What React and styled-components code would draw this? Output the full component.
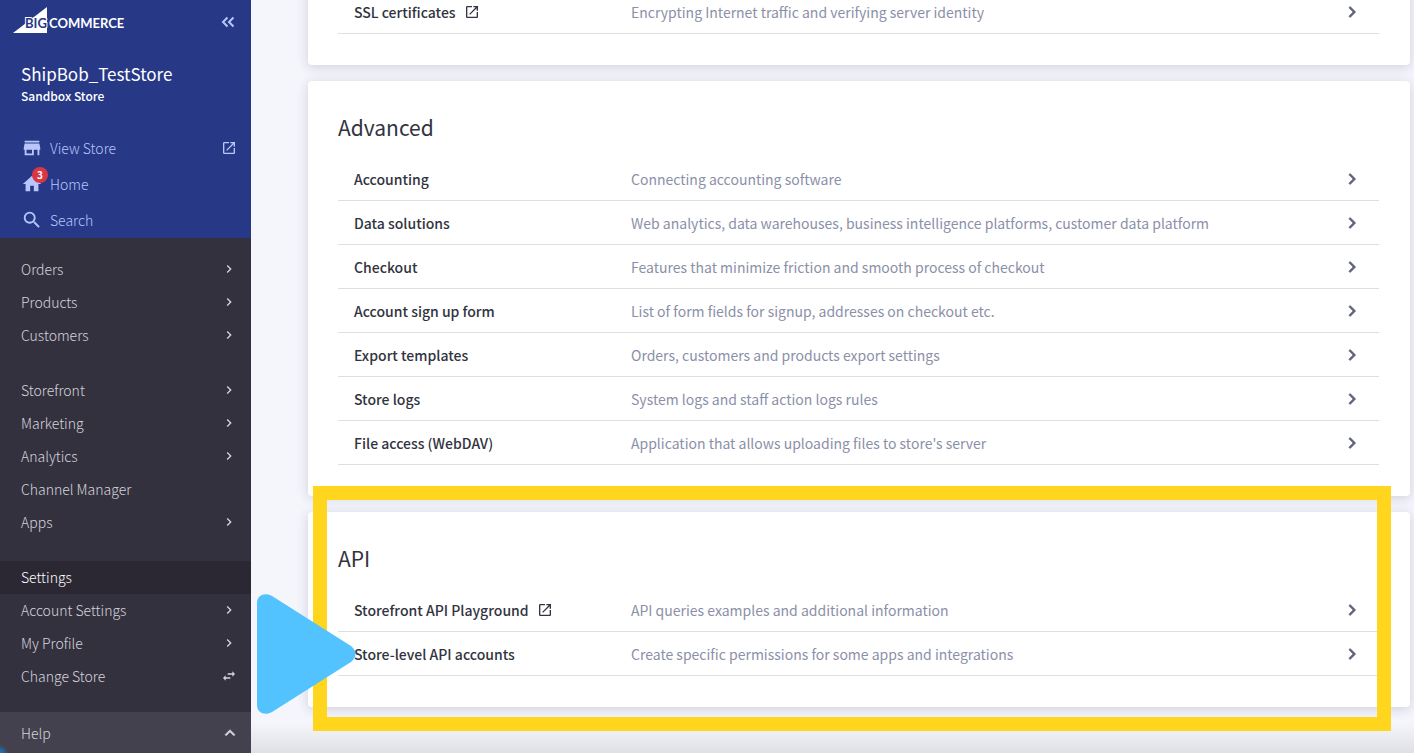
import React from "react";
import styled, { createGlobalStyle } from "styled-components";

const GlobalStyle = createGlobalStyle`
  * { box-sizing: border-box; }
  body {
    margin: 0;
    background: #f5f6fc;
    font-family: "Noto Sans CJK SC", "Noto Sans", sans-serif;
  }
  a { color: inherit; text-decoration: none; }
  ul { list-style: none; margin: 0; padding: 0; }
  button { border: 0; padding: 0; background: none; color: inherit; font: inherit; cursor: pointer; }
`;

const Shell = styled.div`
  display: flex;
  height: 100vh;
  overflow: hidden;
`;

const Sidebar = styled.aside`
  display: flex;
  flex-direction: column;
  flex: 0 0 251px;
  background: #34313f;
  color: #d5d4dc;
`;

const StorePanel = styled.div`
  background: #273887;
  color: #b9c6fb;
`;

const BrandBar = styled.div`
  display: flex;
  align-items: center;
  justify-content: space-between;
  height: 44px;
  padding: 0 15px 0 12px;
`;

const StoreName = styled.h1`
  margin: 18px 21px 0;
  color: #fff;
  font-size: 17px;
  font-weight: 400;
  line-height: 24px;
`;

const StoreKind = styled.p`
  margin: 0 21px 24px;
  color: #fff;
  font-size: 12px;
  font-weight: 500;
  line-height: 20px;
`;

const QuickLink = styled.a`
  display: flex;
  align-items: center;
  gap: 7px;
  height: 36px;
  padding: 0 14px 0 21px;
  font-size: 14px;
  font-weight: 300;
  line-height: 20px;
  > span:nth-child(2) { flex: 1; }
`;

const IconSlot = styled.span`
  position: relative;
  display: flex;
`;

const Badge = styled.span`
  position: absolute;
  top: -6px;
  right: -5px;
  width: 16px;
  height: 16px;
  border-radius: 50%;
  background: #db3643;
  color: #fff;
  font-size: 10px;
  font-weight: 700;
  line-height: 16px;
  text-align: center;
`;

const Nav = styled.nav`
  display: flex;
  flex-direction: column;
  gap: 22px;
  padding-top: 15px;
`;

const NavItem = styled.a`
  display: flex;
  align-items: center;
  justify-content: space-between;
  height: 33px;
  padding: 0 14px 1px 21px;
  background: ${(p) => (p.$active ? "#2b2833" : "transparent")};
  color: ${(p) => (p.$active ? "#fff" : "inherit")};
  font-size: 14px;
  font-weight: 300;
  line-height: 20px;
`;

const HelpButton = styled.button`
  && {
    display: flex;
    align-items: center;
    justify-content: space-between;
    flex: 0 0 41px;
    margin-top: auto;
    padding: 0 11px 0 21px;
    background: radial-gradient(circle at 0 100%, #1f6fb5 2px, #44414e 8px);
    font-size: 14px;
    font-weight: 300;
    line-height: 20px;
  }
`;

const Main = styled.main`
  display: flex;
  flex: 1;
  flex-direction: column;
  gap: 16px;
  min-width: 0;
  padding: 0 4px 0 57px;
  background: linear-gradient(to top, #dfe0e5, #f5f6fc 30px);
`;

const Card = styled.section`
  position: relative;
  z-index: ${(p) => (p.$raised ? 1 : 0)};
  margin-top: ${(p) => (p.$scrolled ? "-40px" : "0")};
  padding: 30px 31px 31px 30px;
  border-radius: 4px;
  background: #fff;
  box-shadow: 0 2px 12px rgba(49, 52, 80, 0.2);
`;

const CardTitle = styled.h2`
  margin: 0 0 14px;
  color: #313440;
  font-size: 21px;
  font-weight: 400;
  line-height: 32px;
`;

const SettingRow = styled.a`
  display: grid;
  grid-template-columns: 277px 1fr 16px;
  align-items: center;
  height: 44px;
  padding: 0 19px 0 16px;
  border-bottom: 1px solid #dddfe6;
  font-size: 14px;
  line-height: 24px;
`;

const SettingName = styled.span`
  display: flex;
  align-items: center;
  gap: 8px;
  color: #313440;
  font-weight: 500;
`;

const SettingText = styled.span`
  color: #8b90a8;
`;

const Highlight = styled.div`
  position: absolute;
  inset: -26px 19px -24px 5px;
  border: 14px solid #ffd51d;
  pointer-events: none;
`;

const Pointer = styled.svg`
  position: absolute;
  top: 82px;
  left: -51px;
  pointer-events: none;
`;

const LogoText = styled.text`
  fill: ${(p) => (p.$dark ? "#273887" : "#fff")};
  stroke: ${(p) => (p.$dark ? "#fff" : "none")};
  stroke-width: 2px;
  paint-order: stroke;
  font-family: Lato, "Open Sans", sans-serif;
  font-size: 13px;
  font-weight: 700;
`;

const Logo = () => (
  <svg width="120" height="30" viewBox="0 0 120 30" role="img" aria-label="BigCommerce">
    <path d="M1 26 35 0V26Z" fill="#fff" />
    <LogoText x="13" y="21" $dark>BIG</LogoText>
    <LogoText x="37" y="21">COMMERCE</LogoText>
  </svg>
);

const icons = {
  external: "M19 19H5V5h7V3H5a2 2 0 0 0-2 2v14a2 2 0 0 0 2 2h14c1.100 0 2-.900 2-2v-7h-2v7zM14 3v2h3.590l-9.830 9.830 1.410 1.410L19 6.410V10h2V3h-7z",
  store: "M20 4H4v2h16V4zm1 10v-2l-1-5H4l-1 5v2h1v6h10v-6h4v6h2v-6h1zm-9 4H6v-4h6v4z",
  home: "M10 20v-6h4v6h5v-8h3L12 3 2 12h3v8z",
  search: "M15.500 14h-.790l-.280-.270A6.470 6.470 0 0 0 16 9.500 6.500 6.500 0 1 0 9.500 16c1.610 0 3.090-.590 4.230-1.570l.270.280v.790l5 4.990L20.490 19l-4.990-5zm-6 0C7.010 14 5 11.990 5 9.500S7.010 5 9.500 5 14 7.010 14 9.500 11.990 14 9.500 14z",
  right: "M10 6 8.590 7.410 13.170 12l-4.580 4.590L10 18l6-6z",
  up: "m12 8-6 6 1.410 1.410L12 10.830l4.590 4.580L18 14z",
  swap: "M6.990 11 3 15l3.990 4v-3H14v-2H6.990v-3zM21 9l-3.990-4v3H10v2h7.010v3L21 9z",
};

const Icon = ({ name, size = 16, bold = false }) => (
  <svg
    width={size}
    height={size}
    viewBox="0 0 24 24"
    fill="currentColor"
    stroke={bold ? "currentColor" : "none"}
    strokeWidth="0.7"
    aria-hidden="true"
  >
    <path d={icons[name]} />
  </svg>
);

const navGroups = [
  [["Orders", "right"], ["Products", "right"], ["Customers", "right"]],
  [["Storefront", "right"], ["Marketing", "right"], ["Analytics", "right"], ["Channel Manager"], ["Apps", "right"]],
  [["Settings"], ["Account Settings", "right"], ["My Profile", "right"], ["Change Store", "swap"]],
];

const advanced = [
  ["Accounting", "Connecting accounting software"],
  ["Data solutions", "Web analytics, data warehouses, business intelligence platforms, customer data platform"],
  ["Checkout", "Features that minimize friction and smooth process of checkout"],
  ["Account sign up form", "List of form fields for signup, addresses on checkout etc."],
  ["Export templates", "Orders, customers and products export settings"],
  ["Store logs", "System logs and staff action logs rules"],
  ["File access (WebDAV)", "Application that allows uploading files to store's server"],
];

const api = [
  ["Storefront API Playground", "API queries examples and additional information", true],
  ["Store-level API accounts", "Create specific permissions for some apps and integrations"],
];

const Chevron = styled.span`
  display: flex;
  justify-content: center;
  color: #5e637a;
  svg { flex: none; }
`;

const Settings = ({ rows }) => (
  <ul>
    {rows.map(([name, text, external]) => (
      <li key={name}>
        <SettingRow href="#">
          <SettingName>
            {name}
            {external && <Icon name="external" />}
          </SettingName>
          <SettingText>{text}</SettingText>
          <Chevron><Icon name="right" size={22} bold /></Chevron>
        </SettingRow>
      </li>
    ))}
  </ul>
);

export default function App() {
  return (
    <Shell>
      <GlobalStyle />
      <Sidebar>
        <StorePanel>
          <BrandBar>
            <Logo />
            <button type="button" aria-label="Collapse menu">
              <svg width="16" height="16" viewBox="0 0 16 16" fill="none" stroke="currentColor" strokeWidth="2" display="block">
                <path d="M7.500 3.500 3 8l4.500 4.500M13.500 3.500 9 8l4.500 4.500" />
              </svg>
            </button>
          </BrandBar>
          <StoreName>ShipBob_TestStore</StoreName>
          <StoreKind>Sandbox Store</StoreKind>
          <QuickLink href="#">
            <IconSlot><Icon name="store" size={22} /></IconSlot>
            <span>View Store</span>
            <Icon name="external" />
          </QuickLink>
          <QuickLink href="#">
            <IconSlot><Icon name="home" size={22} /><Badge>3</Badge></IconSlot>
            <span>Home</span>
          </QuickLink>
          <QuickLink href="#">
            <IconSlot><Icon name="search" size={22} /></IconSlot>
            <span>Search</span>
          </QuickLink>
        </StorePanel>
        <Nav>
          {navGroups.map((group) => (
            <ul key={group[0][0]}>
              {group.map(([label, icon]) => (
                <li key={label}>
                  <NavItem href="#" $active={label === "Settings"}>
                    {label}
                    {icon && <Icon name={icon} />}
                  </NavItem>
                </li>
              ))}
            </ul>
          ))}
        </Nav>
        <HelpButton type="button">Help<Icon name="up" size={20} bold /></HelpButton>
      </Sidebar>
      <Main>
        <Card $scrolled>
          <Settings rows={[["SSL certificates", "Encrypting Internet traffic and verifying server identity", true]]} />
        </Card>
        <Card>
          <CardTitle>Advanced</CardTitle>
          <Settings rows={advanced} />
        </Card>
        <Card $raised>
          <CardTitle>API</CardTitle>
          <Settings rows={api} />
          <Highlight />
          <Pointer width="99" height="120" viewBox="0 0 99 120" aria-hidden="true">
            <path d="M0 9C0 1 8-2 15 2L94 52Q103 60 94 68L15 118C8 122 0 119 0 111Z" fill="#52c3ff" />
          </Pointer>
        </Card>
      </Main>
    </Shell>
  );
}
